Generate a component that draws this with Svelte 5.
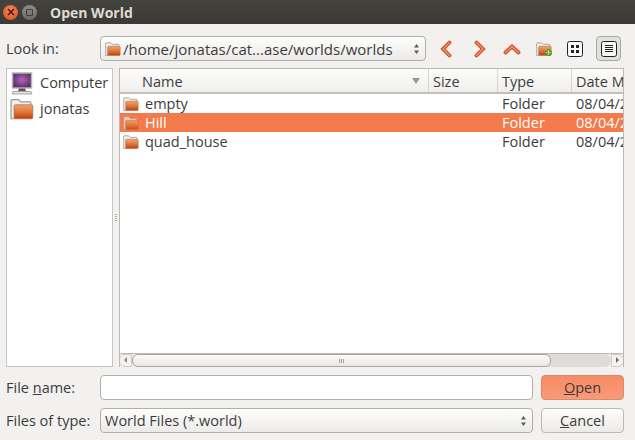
<script>
	let rows = [
		{ name: 'empty', type: 'Folder', date: '08/04/2' },
		{ name: 'Hill', type: 'Folder', date: '08/04/2', selected: true },
		{ name: 'quad_house', type: 'Folder', date: '08/04/2' }
	];
</script>

<svg width="0" height="0" class="defs" aria-hidden="true">
	<defs>
		<linearGradient id="fold" x1="0" y1="0" x2="0" y2="1">
			<stop offset="0" stop-color="#efa475" />
			<stop offset="0.5" stop-color="#e07a38" />
			<stop offset="1" stop-color="#bf3c16" />
		</linearGradient>
		<radialGradient id="screen" cx="0.5" cy="0.45" r="0.6">
			<stop offset="0" stop-color="#b565b5" />
			<stop offset="1" stop-color="#4e2a68" />
		</radialGradient>
		<symbol id="folder" viewBox="0 0 16 16">
			<path d="M.7 14.500V2.500q0-.7.7-.7h4.300l1.500 1.500h6q.7 0 .7.7V6H3v8.500z" fill="#f1efec" stroke="#9c9894" stroke-width=".8" />
			<rect x="2.800" y="5.200" width="12.400" height="9.300" rx=".8" fill="url(#fold)" stroke="#c0683c" stroke-width=".5" />
		</symbol>
	</defs>
</svg>

<div class="dialog">
	<header class="titlebar">
		<span class="winbtn close">
			<svg width="8" height="8" viewBox="0 0 8 8"><path d="M1 1l6 6M7 1l-6 6" stroke="#4a1c10" stroke-width="1.600" /></svg>
		</span>
		<span class="winbtn max"><i></i></span>
		<span class="title">Open World</span>
	</header>

	<div class="content">
		<div class="row top">
			<span class="label">Look in:</span>
			<div class="combo path">
				<svg class="ic16" width="16" height="16"><use href="#folder" /></svg>
				<span class="grow">/home/jonatas/cat...ase/worlds/worlds</span>
				<svg class="updown" width="7" height="14" viewBox="0 0 7 14"><path d="M3.500 2L6 5.500H1zM3.500 12L1 8.500h5z" fill="#5c5c5c" /></svg>
			</div>
			<div class="tools">
				<svg class="tool" width="14" height="18" viewBox="0 0 14 18">
					<path d="M10.500 2.500L4 9l6.500 6.500" fill="none" stroke="#cf5026" stroke-width="3.800" stroke-linecap="round" />
					<path d="M10.500 2.500L4 9l6.500 6.500" fill="none" stroke="#ee9663" stroke-width="1.400" stroke-linecap="round" />
				</svg>
				<svg class="tool" width="14" height="18" viewBox="0 0 14 18">
					<path d="M3.500 2.500L10 9l-6.500 6.500" fill="none" stroke="#cf5026" stroke-width="3.800" stroke-linecap="round" />
					<path d="M3.500 2.500L10 9l-6.500 6.500" fill="none" stroke="#ee9663" stroke-width="1.400" stroke-linecap="round" />
				</svg>
				<svg class="tool" width="18" height="12" viewBox="0 0 18 12">
					<path d="M2.500 9.500L9 3.500l6.500 6" fill="none" stroke="#cf5026" stroke-width="3.800" stroke-linecap="round" />
					<path d="M2.500 9.500L9 3.500l6.500 6" fill="none" stroke="#ee9663" stroke-width="1.400" stroke-linecap="round" />
				</svg>
				<svg class="tool" width="18" height="18" viewBox="0 0 18 18">
					<use href="#folder" width="16" height="16" y="1" />
					<path d="M12.500 9v7M9 12.500h7" stroke="#5f9e36" stroke-width="3.400" />
					<path d="M12.500 10v5M10 12.500h5" stroke="#a8d878" stroke-width="1.200" />
				</svg>
				<span class="viewbtn">
					<svg width="16" height="16" viewBox="0 0 16 16">
						<rect x=".5" y=".5" width="15" height="15" rx="2" fill="#f6f8fb" stroke="#222" />
						<path d="M4 4h3v3H4zM9 4h3v3H9zM4 9h3v3H4zM9 9h3v3H9z" fill="#222" />
					</svg>
				</span>
				<span class="viewbtn active">
					<svg width="16" height="16" viewBox="0 0 16 16">
						<rect x=".5" y=".5" width="15" height="15" rx="2" fill="#f6f8fb" stroke="#222" />
						<path d="M4 4.500h8M4 6.500h8M4 8.500h8M4 10.500h8" stroke="#222" />
					</svg>
				</span>
			</div>
		</div>

		<div class="main">
			<aside class="sidebar">
				<div class="place">
					<svg width="22" height="23" viewBox="0 0 22 23">
						<rect x="1.500" y="1" width="19" height="15" fill="url(#screen)" stroke="#b4b4b0" stroke-width="1.500" />
						<path d="M8 16.500h6l1 2.500H7z" fill="#555" />
						<path d="M2 19.500h18l.8 2.500H1.200z" fill="#e2e2de" stroke="#777" stroke-width=".6" />
					</svg>
					<span>Computer</span>
				</div>
				<div class="place home">
					<svg width="24" height="24"><use href="#folder" /></svg>
					<span>jonatas</span>
				</div>
			</aside>

			<div class="splitter"><i></i></div>

			<div class="listing">
				<div class="list-head">
					<div class="col c-name">Name<span class="sort"></span></div>
					<div class="col c-size">Size</div>
					<div class="col c-type">Type</div>
					<div class="col c-date">Date M</div>
				</div>
				<div class="list-body">
					{#each rows as r}
						<div class="item" class:selected={r.selected}>
							<div class="c-name cell">
								<svg class="fold" width="16" height="16"><use href="#folder" /></svg>
								{r.name}
							</div>
							<div class="c-size cell"></div>
							<div class="c-type cell">{r.type}</div>
							<div class="c-date cell">{r.date}</div>
						</div>
					{/each}
				</div>
				<div class="hscroll">
					<span class="arrow left"></span>
					<div class="trough"><div class="thumb"><i></i></div></div>
					<span class="arrow right"></span>
				</div>
			</div>
		</div>

		<div class="row name-row">
			<span class="label">File <u>n</u>ame:</span>
			<div class="input"></div>
			<button class="btn primary" type="button"><u>O</u>pen</button>
		</div>

		<div class="row type-row">
			<span class="label">Files of type:</span>
			<div class="combo">
				<span class="grow">World Files (*.world)</span>
				<svg class="updown" width="7" height="14" viewBox="0 0 7 14"><path d="M3.500 2L6 5.500H1zM3.500 12L1 8.500h5z" fill="#5c5c5c" /></svg>
			</div>
			<button class="btn" type="button"><u>C</u>ancel</button>
		</div>
	</div>
</div>

<style>
	:global(body) {
		margin: 0;
		background: #f2f1f0;
	}

	.defs {
		position: absolute;
	}

	.dialog {
		width: 635px;
		height: 440px;
		overflow: hidden;
		background: #f2f1f0;
		color: #3c3c3c;
		font-family: "Open Sans", "Noto Sans", sans-serif;
		font-size: 14.500px;
	}

	.titlebar {
		height: 24px;
		display: flex;
		align-items: center;
		background: linear-gradient(#45433e, #3a3935);
		padding-left: 3px;
		box-sizing: border-box;
	}

	.winbtn {
		width: 15px;
		height: 15px;
		border-radius: 50%;
		display: flex;
		align-items: center;
		justify-content: center;
		margin-right: 4px;
	}

	.close {
		background: radial-gradient(circle at 50% 35%, #f58a5c, #d9481e);
	}

	.max {
		background: linear-gradient(#8e8c86, #6b6963);
	}

	.max i {
		width: 5px;
		height: 5px;
		border: 1px solid #3f3e3a;
		border-radius: 1px;
	}

	.title {
		margin-left: 9px;
		color: #dfdbd2;
		font-weight: 700;
		font-size: 14px;
	}

	.content {
		padding: 12px 11px 0 6px;
	}

	.row {
		display: flex;
		align-items: center;
	}

	.label {
		width: 94px;
		flex: none;
	}

	.top {
		height: 25px;
	}

	.combo,
	.input {
		height: 25px;
		box-sizing: border-box;
		border: 1px solid #b3aea8;
		border-radius: 4px;
	}

	.combo {
		flex: 1;
		display: flex;
		align-items: center;
		padding: 0 5px 0 4px;
		background: linear-gradient(#fdfdfc, #ecebe9);
	}

	.path {
		flex: none;
		width: 326px;
		font-size: 15px;
	}

	.ic16 {
		margin-right: 2px;
		flex: none;
	}

	.grow {
		flex: 1;
		white-space: nowrap;
	}

	.tools {
		flex: 1;
		display: flex;
		align-items: center;
		height: 25px;
	}

	.tool {
		flex: none;
	}

	.tools .tool:nth-child(1) { margin-left: 13px; }
	.tools .tool:nth-child(2) { margin-left: 20px; }
	.tools .tool:nth-child(3) { margin-left: 16px; }
	.tools .tool:nth-child(4) { margin-left: 15px; }

	.viewbtn {
		width: 25px;
		height: 25px;
		box-sizing: border-box;
		display: flex;
		align-items: center;
		justify-content: center;
		margin-left: 8px;
		border: 1px solid transparent;
		border-radius: 4px;
	}

	.viewbtn.active {
		margin-left: 9px;
		background: #e2e0dd;
		border-color: #aaa6a0;
	}

	.main {
		display: flex;
		height: 299px;
		margin-top: 7px;
	}

	.sidebar {
		width: 107px;
		box-sizing: border-box;
		background: #fff;
		border: 1px solid #c8c4bf;
		overflow: hidden;
		padding-top: 2px;
	}

	.place {
		display: flex;
		align-items: center;
		height: 25px;
		padding-left: 4px;
		gap: 7px;
		white-space: nowrap;
	}

	.place span {
		margin-top: -2px;
	}

	.place.home {
		padding-left: 3px;
		gap: 6px;
	}

	.place.home span {
		margin-top: 0;
	}

	.splitter {
		width: 6px;
		flex: none;
		display: flex;
		align-items: center;
		justify-content: center;
	}

	.splitter i {
		width: 2px;
		height: 7px;
		background: repeating-linear-gradient(#b5b1ab 0 1px, transparent 1px 2px);
	}

	.listing {
		flex: 1;
		min-width: 0;
		box-sizing: border-box;
		display: flex;
		flex-direction: column;
		border: 1px solid #bdb9b4;
		border-bottom: none;
		background: #fff;
		overflow: hidden;
	}

	.list-head {
		display: flex;
		height: 25px;
		flex: none;
		box-sizing: border-box;
		border-bottom: 2px solid #c4c0bb;
		background: linear-gradient(#fcfcfb, #f0efed);
	}

	.col {
		display: flex;
		align-items: center;
		box-sizing: border-box;
		padding: 2px 0 0 4px;
		border-right: 1px solid #d8d5d1;
		white-space: nowrap;
		flex: none;
	}

	.c-name { width: 309px; }
	.c-size { width: 69px; }
	.c-type { width: 74px; }
	.c-date { width: 60px; }

	.col.c-name {
		padding-left: 22px;
		position: relative;
	}

	.col.c-date {
		border-right: none;
	}

	.sort {
		position: absolute;
		right: 8px;
		top: 9px;
		border: 4px solid transparent;
		border-top: 6px solid #9a9792;
		border-bottom: none;
	}

	.list-body {
		flex: 1;
	}

	.item {
		display: flex;
		height: 19px;
		align-items: center;
	}

	.item.selected {
		background: #f37a4a;
		color: #fff;
	}

	.cell {
		flex: none;
		box-sizing: border-box;
		padding-left: 4px;
		white-space: nowrap;
		display: flex;
		align-items: center;
		overflow: hidden;
	}

	.c-name.cell {
		padding-left: 3px;
		gap: 6px;
	}

	.selected .fold {
		opacity: 0.75;
	}

	.hscroll {
		flex: none;
		height: 13px;
		display: flex;
		align-items: stretch;
		background: #f2f1f0;
		border-top: 1px solid #bdb9b4;
		margin: 0 -1px;
	}

	.arrow {
		width: 13px;
		flex: none;
		box-sizing: border-box;
		background: #f4f3f2;
		border: 1px solid #cfccc8;
		position: relative;
	}

	.arrow.left {
		border-radius: 6px 0 0 6px;
	}

	.arrow.right {
		border-radius: 0 6px 6px 0;
	}

	.arrow::after {
		content: '';
		position: absolute;
		top: 2px;
		border: 3px solid transparent;
	}

	.arrow.left::after {
		left: 1px;
		border-right: 3px solid #8b8883;
	}

	.arrow.right::after {
		left: 4px;
		border-left: 3px solid #6e6b67;
	}

	.trough {
		flex: 1;
		background: #dedcd9;
		border-radius: 6px;
	}

	.thumb {
		width: 419px;
		height: 100%;
		box-sizing: border-box;
		background: linear-gradient(#fafaf9, #e9e7e5);
		border: 1px solid #a9a5a0;
		border-radius: 6px;
		display: flex;
		align-items: center;
		justify-content: center;
	}

	.thumb i {
		width: 5px;
		height: 4px;
		background: repeating-linear-gradient(90deg, #a5a19c 0 1px, transparent 1px 2px);
	}

	.name-row {
		margin-top: 8px;
	}

	.type-row {
		margin-top: 8px;
	}

	.input {
		flex: 1;
		background: #fff;
	}

	.btn {
		width: 83px;
		height: 25px;
		margin-left: 8px;
		flex: none;
		box-sizing: border-box;
		padding: 0;
		border: 1px solid #bdb9b4;
		border-radius: 4px;
		background: linear-gradient(#fcfcfb, #eceae8);
		color: #3c3c3c;
		font: inherit;
	}

	.btn.primary {
		background: linear-gradient(#f58c66, #fa9a78);
		border-color: #d98a6a;
	}
</style>
